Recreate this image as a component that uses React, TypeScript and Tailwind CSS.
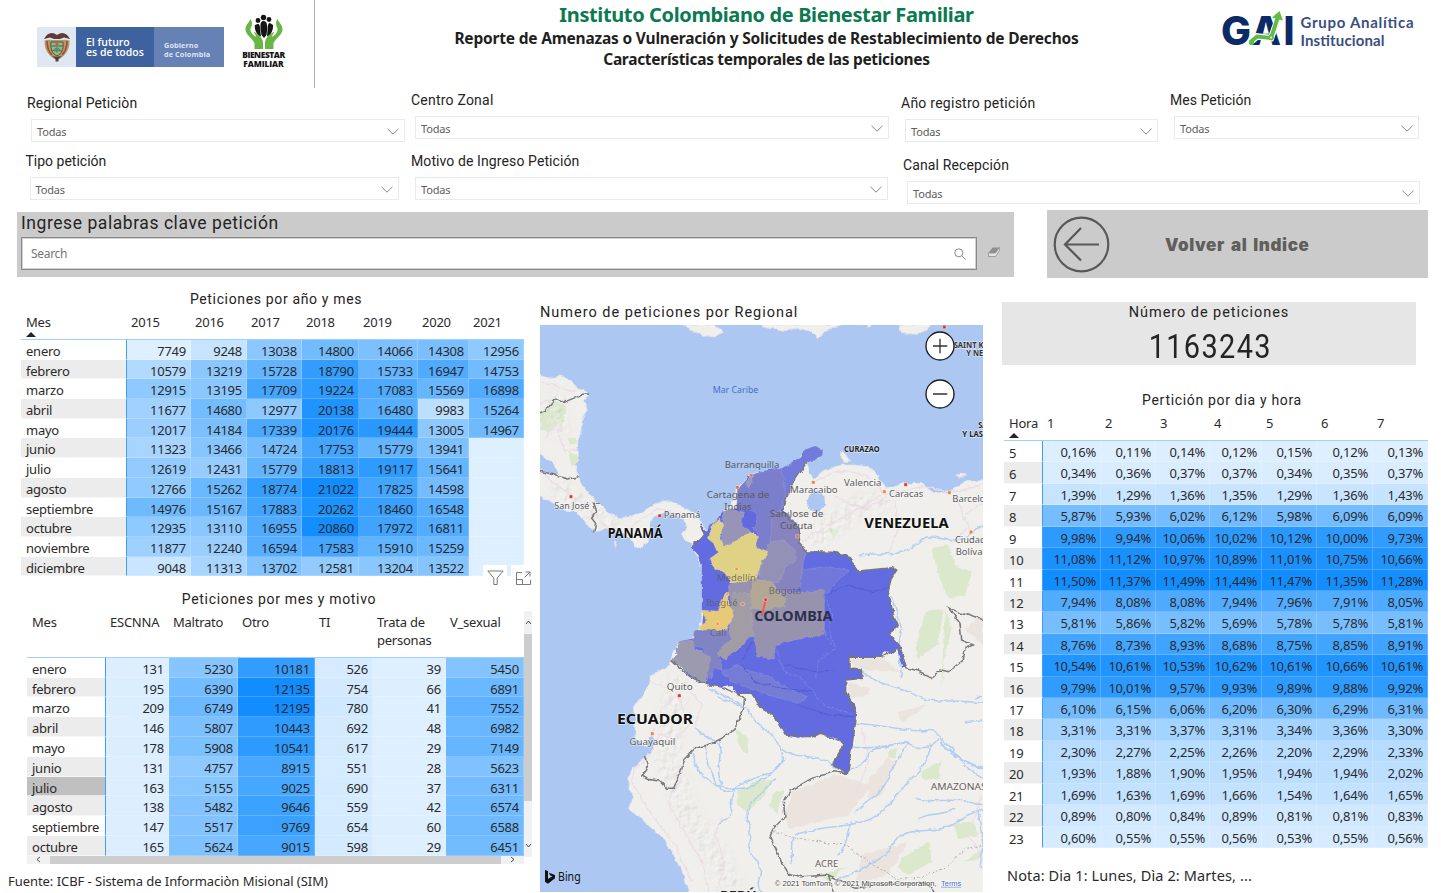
import React from "react";

const DIN = "font-[Roboto,sans-serif] text-[#252423]";
const SEGOE = "font-['Noto_Sans',sans-serif] text-[#2b2a29]";

/* ---------- heat scale ---------- */

function heat(value: number | null, min: number, max: number): string {
  const t = value === null ? 0 : (value - min) / (max - min);
  const mix = (a: number, b: number) => Math.round(a + (b - a) * t);
  return `rgb(${mix(222, 17)},${mix(239, 141)},255)`;
}

/* ---------- data ---------- */

const MONTHS = ["enero", "febrero", "marzo", "abril", "mayo", "junio", "julio", "agosto", "septiembre", "octubre", "noviembre", "diciembre"];

const BY_YEAR: (number | null)[][] = [
  [7749, 9248, 13038, 14800, 14066, 14308, 12956],
  [10579, 13219, 15728, 18790, 15733, 16947, 14753],
  [12915, 13195, 17709, 19224, 17083, 15569, 16898],
  [11677, 14680, 12977, 20138, 16480, 9983, 15264],
  [12017, 14184, 17339, 20176, 19444, 13005, 14967],
  [11323, 13466, 14724, 17753, 15779, 13941, null],
  [12619, 12431, 15779, 18813, 19117, 15641, null],
  [12766, 15262, 18774, 21022, 17825, 14598, null],
  [14976, 15167, 17883, 20262, 18460, 16548, null],
  [12935, 13110, 16955, 20860, 17972, 16811, null],
  [11877, 12240, 16594, 17583, 15910, 15259, null],
  [9048, 11313, 13702, 12581, 13204, 13522, null],
];

const BY_MOTIVE: number[][] = [
  [131, 5230, 10181, 526, 39, 5450],
  [195, 6390, 12135, 754, 66, 6891],
  [209, 6749, 12195, 780, 41, 7552],
  [146, 5807, 10443, 692, 48, 6982],
  [178, 5908, 10541, 617, 29, 7149],
  [131, 4757, 8915, 551, 28, 5623],
  [163, 5155, 9025, 690, 37, 6311],
  [138, 5482, 9646, 559, 42, 6574],
  [147, 5517, 9769, 654, 60, 6588],
  [165, 5624, 9015, 598, 29, 6451],
];

const BY_HOUR: number[][] = [
  [0.16, 0.11, 0.14, 0.12, 0.15, 0.12, 0.13],
  [0.34, 0.36, 0.37, 0.37, 0.34, 0.35, 0.37],
  [1.39, 1.29, 1.36, 1.35, 1.29, 1.36, 1.43],
  [5.87, 5.93, 6.02, 6.12, 5.98, 6.09, 6.09],
  [9.98, 9.94, 10.06, 10.02, 10.12, 10.0, 9.73],
  [11.08, 11.12, 10.97, 10.89, 11.01, 10.75, 10.66],
  [11.5, 11.37, 11.49, 11.44, 11.47, 11.35, 11.28],
  [7.94, 8.08, 8.08, 7.94, 7.96, 7.91, 8.05],
  [5.81, 5.86, 5.82, 5.69, 5.78, 5.78, 5.81],
  [8.76, 8.73, 8.93, 8.68, 8.75, 8.85, 8.91],
  [10.54, 10.61, 10.53, 10.62, 10.61, 10.66, 10.61],
  [9.79, 10.01, 9.57, 9.93, 9.89, 9.88, 9.92],
  [6.1, 6.15, 6.06, 6.2, 6.3, 6.29, 6.31],
  [3.31, 3.31, 3.37, 3.31, 3.34, 3.36, 3.3],
  [2.3, 2.27, 2.25, 2.26, 2.2, 2.29, 2.33],
  [1.93, 1.88, 1.9, 1.95, 1.94, 1.94, 2.02],
  [1.69, 1.63, 1.69, 1.66, 1.54, 1.64, 1.65],
  [0.89, 0.8, 0.84, 0.89, 0.81, 0.81, 0.83],
  [0.6, 0.55, 0.55, 0.56, 0.53, 0.55, 0.56],
];

/* ---------- matrix ---------- */

type MatrixProps = {
  cols: string;
  headClass: string;
  rowClass: string;
  labelClass?: string;
  corner: string;
  sorted?: boolean;
  heads: string[];
  labels: string[];
  values: (number | null)[][];
  format: (v: number) => string;
  selected?: string;
};

function Matrix({ cols, headClass, rowClass, labelClass = "", corner, sorted, heads, labels, values, format, selected }: MatrixProps) {
  const flat = values.flat().filter((v): v is number => v !== null);
  const min = Math.min(...flat);
  const max = Math.max(...flat);
  return (
    <div className={`${SEGOE} text-[13px] tracking-[-0.24px]`}>
      <div className={`grid ${cols} ${headClass} border-b border-[#9fd1ff]`}>
        <div className="pl-[5px]">
          {corner}
          {sorted && (
            <svg className="block" width="10" height="5" viewBox="0 0 10 5">
              <path d="M5 0L10 5H0Z" fill="#252423" />
            </svg>
          )}
        </div>
        {heads.map((h) => (
          <div key={h} className="whitespace-pre pl-[4px]">{h}</div>
        ))}
      </div>
      {values.map((row, r) => (
        <div key={labels[r]} className={`grid grid-rows-[100%] ${cols} ${rowClass}`}>
          <div
            className={`border-r border-r-[#3a9fff] border-b border-b-white/60 pl-[5px] ${labelClass} ${
              labels[r] === selected ? "bg-[#c0c0c0]" : r % 2 ? "bg-[#ececec]" : "bg-white"
            }`}
          >
            {labels[r]}
          </div>
          {row.map((v, c) => (
            <div key={c} className="border-r border-b border-white/20 pr-[4px] text-right" style={{ backgroundColor: heat(v, min, max) }}>
              {v === null ? "" : format(v)}
            </div>
          ))}
        </div>
      ))}
    </div>
  );
}

/* ---------- slicers ---------- */

function Slicer({ label, className, labelClass = "" }: { label: string; className: string; labelClass?: string }) {
  return (
    <div className={className}>
      <div className={`${DIN} h-5 whitespace-nowrap text-[14px] leading-[21px] ${labelClass}`}>{label}</div>
      <div className="mt-[6px] ml-[4px] flex h-[23px] items-center justify-between border border-[#eaeaea] pr-[5px] pl-[5px]">
        <span className="font-['Noto_Sans',sans-serif] pt-[3px] text-[11px] tracking-[-0.15px] text-[#605e5c]">Todas</span>
        <svg className="mt-px" width="12" height="7" viewBox="0 0 12 7" fill="none" stroke="#8a8886">
          <path d="M.5 .8L6 6.2L11.500 .8" />
        </svg>
      </div>
    </div>
  );
}

/* ---------- logos ---------- */

function GovernmentLogo() {
  return (
    <div className="mt-[27px] flex h-[40px] w-[187px] text-white">
      <div className="flex w-[39px] items-center justify-center bg-[#dfe8f2]">
        <svg width="28" height="30" viewBox="0 0 28 30">
          <path d="M1 7C4 1 9 -1 14 3C19 -1 24 1 27 7L21 5.500L17 7H11L7 5.500Z" fill="#5c3b35" />
          <path d="M1.500 8.500C5 7 9 8 14 8S23 7 26.500 8.500C27 19 21 25 14 28C7 25 1 19 1.500 8.500Z" fill="#b59a63" />
          <path d="M4 9C4 16 6 20 9 23M24 9C24 16 22 20 19 23" stroke="#a34b3d" strokeWidth="1.600" fill="none" />
          <path d="M8 10H20C21 18 18 22 14 24C10 22 7 18 8 10Z" fill="#8fb8a2" stroke="#5f4f37" />
          <path d="M8 14H20M9 18.500H19" stroke="#6d7c4b" strokeWidth="1.400" />
          <circle cx="14" cy="12" r="1.600" fill="#b8653b" />
          <path d="M11 17L14 15L17 17L14 21Z" fill="#59905f" />
          <path d="M9 24C12 25 16 25 19 24L15.500 27V29.500H12.500V27Z" fill="#5c3b35" />
        </svg>
      </div>
      <div className="w-[78px] bg-[#3e629f] pt-[10px] pl-[10px] font-['Open_Sans',sans-serif] text-[10.500px] leading-[10px] font-semibold whitespace-nowrap">
        <div>El futuro</div>
        <div>es de todos</div>
      </div>
      <div className="w-[70px] bg-[#6681b5] pt-[14px] pl-[10px] font-['Open_Sans',sans-serif] text-[7.300px] leading-[8.500px] font-bold tracking-[0.1px] whitespace-nowrap text-[#dbe4f4]">
        Gobierno
        <br />
        de Colombia
      </div>
    </div>
  );
}

function FamilyLogo() {
  return (
    <div className="mt-[14px] ml-[18px] w-[43px]">
      <svg className="mx-auto block" width="38" height="36" viewBox="0 0 38 36">
        <g fill="#151515">
          <circle cx="18.500" cy="3.500" r="2.700" />
          <circle cx="13" cy="6.500" r="2.400" />
          <circle cx="24" cy="5.500" r="2.400" />
          <path d="M18.500 7C23 7 22.500 14 21.500 21L19 24L16.500 21C15 13 14.500 7 18.500 7Z" />
          <path d="M12.500 10C15.500 9 15 15 16 22.500C11 21 9 14 10 11Z" />
          <path d="M25 9C22 9 23 15 22 22.500C27 21 28.500 14 28 11Z" />
        </g>
        <path
          d="M5.500 5C4 9 0 11 .5 16C1 21 7 24 9.500 29V35H18V28C17 23 13 20 8.500 17.500L11.500 23C7.500 21 5 18 5.500 14.500C7.500 11 7.500 8 5.500 5ZM32.500 5C34 9 38 11 37.500 16C37 21 31 24 28.500 29V35H20V28C21 23 25 20 29.500 17.500L26.500 23C30.500 21 33 18 32.500 14.500C30.500 11 30.500 8 32.500 5Z"
          fill="#69b546"
        />
      </svg>
      <div className="font-['Open_Sans',sans-serif] text-center text-[8.400px] leading-[9px] font-extrabold tracking-[-0.4px] text-[#151515]">
        BIENESTAR
        <br />
        <span className="tracking-[-0.1px]">FAMILIAR</span>
      </div>
    </div>
  );
}

function GaiLogo() {
  return (
    <svg width="200" height="62" viewBox="1218 0 200 62">
      <g fill="#0b2a66" fontFamily="Inter, sans-serif" fontWeight="800" fontSize="39">
        <text x="1221" y="45" textLength="30" lengthAdjust="spacingAndGlyphs">G</text>
        <text x="1251" y="45" textLength="30" lengthAdjust="spacingAndGlyphs">A</text>
        <text x="1283.500" y="45" textLength="11" lengthAdjust="spacingAndGlyphs">I</text>
      </g>
      <path d="M1250 42.500L1257 36.500L1271 38L1278 19" fill="none" stroke="#fff" strokeWidth="6.500" />
      <path d="M1250 42.500L1257 36.500L1271 38L1278 17" fill="none" stroke="#62bb46" strokeWidth="4" />
      <path d="M1272 17.500L1279.500 11L1283 20.500Z" fill="#62bb46" />
      <circle cx="1251.500" cy="42.500" r="2.600" fill="#62bb46" />
      <circle cx="1271" cy="37.500" r="2.800" fill="#62bb46" />
      <circle cx="1271" cy="37.500" r="1" fill="#fff" />
      <g fill="#3a4f7f" fontFamily="Lato, sans-serif" fontWeight="700" fontSize="15">
        <text x="1300.500" y="28" textLength="113" lengthAdjust="spacing">Grupo Analítica</text>
        <text x="1300.500" y="45.500" textLength="84" lengthAdjust="spacing">Institucional</text>
      </g>
    </svg>
  );
}

/* ---------- map ---------- */

const LAND =
  "M0 238L40 248L80 243L110 258L125 280L155 290L160 300L148 318L157 345L140 370L138 410L128 440L130 480L120 510L130 545L150 580L185 620L215 650L250 668L290 665L330 645L370 622L410 620L450 640L480 655L500 680L520 715L535 700L545 680L560 650L590 630L605 580L640 545L655 535L710 525L745 520L790 495L810 468L840 453L864 470L858 488L815 505L822 525L840 548L870 525L920 510L960 510L1000 515L1030 540L1035 560L1060 578L1100 565L1160 565L1190 590L1240 590L1290 560L1360 555L1360 1810L470 1810L440 1725L420 1690L400 1650L375 1620L350 1600L290 1545L280 1540L295 1515L285 1485L275 1450L290 1425L315 1400L330 1385L355 1365L352 1325L340 1330L335 1355L300 1330L300 1270L295 1240L320 1200L345 1165L345 1140L380 1125L405 1110L410 1095L425 1050L440 1040L470 1030L490 1005L500 975L500 820L490 790L470 760L472 742L450 735L440 715L460 695L430 665L395 650L360 660L345 680L345 710L340 740L320 760L300 755L290 735L260 710L220 700L185 710L160 695L140 670L125 650L100 650L60 630L40 615L0 595Z";

const COLOMBIA =
  "M498 683L508 720L490 740L478 740L470 760L490 780L500 810L500 945L505 960L500 1000L475 1030L440 1038L422 1060L425 1080L410 1097L440 1115L465 1145L490 1160L515 1168L555 1175L590 1170L605 1195L650 1195L680 1240L720 1265L730 1290L750 1320L790 1328L830 1325L860 1315L900 1330L928 1347L892 1408L937 1438L965 1260L960 1230L932 1190L932 1155L982 1150L978 1125L942 1122L942 1087L1040 1087L1045 1072L1070 1075L1086 1060L1102 1118L1115 1118L1095 1050L1062 1015L1088 995L1075 960L1060 890L1068 850L1083 825L1070 818L1000 825L970 828L935 780L890 772L815 770L795 745L790 700L760 665L740 645L770 570L815 505L862 485L862 468L840 453L808 465L800 485L745 520L700 525L655 537L640 545L608 580L605 640L560 650L545 675L525 690L515 710Z";

const DEPARTMENTS: [string, string][] = [
  ["#727ada", "M740 522L800 485L808 465L840 453L862 468L862 485L815 505L770 570L740 645L735 600Z"],
  ["#7b7fcb", "M608 580L655 537L742 522L745 560L752 600L735 645L720 700L700 770L668 760L665 712L640 680L620 640L605 640Z"],
  ["#6269dd", "M622 640L660 650L665 690L640 705L620 685Z"],
  ["#9a98bb", "M630 560L652 540L655 560L640 580Z"],
  ["#9794b8", "M560 652L590 640L625 655L620 690L650 710L610 735L585 755L555 750L567 690Z"],
  ["#8683bf", "M715 650L762 655L792 700L795 745L815 770L805 800L800 870L760 900L700 880L665 850L680 800L700 770Z"],
  ["#9391b6", "M705 740L750 735L785 770L780 800L750 820L730 860L690 860L670 840L682 800Z"],
  ["#7178da", "M800 825L870 815L940 825L900 870L860 905L868 925L800 930L750 915L795 890Z"],
  ["#9792ae", "M580 870L650 850L700 865L760 895L868 885L868 1018L780 1035L720 1050L718 1092L665 1085L655 1020L590 1010L590 940Z"],
  ["#b2a795", "M655 850L715 862L730 895L752 915L748 938L722 935L700 945L650 940L645 900Z"],
  ["#a29ca4", "M595 895L650 895L650 950L655 1020L615 1060L570 1093L545 1080L580 1020L590 960Z"],
  ["#8084c3", "M478 1005L580 1005L590 1030L545 1070L565 1125L540 1120L525 1150L515 1100L505 1060L470 1050Z"],
  ["#9c9aae", "M440 1038L470 1035L480 1060L525 1085L515 1166L490 1160L440 1115L410 1097L425 1080L422 1060Z"],
  ["#757cd5", "M560 1130L600 1110L650 1130L700 1140L760 1180L820 1205L790 1225L700 1200L640 1180L590 1160Z"],
  ["#dfd284", "M530 690L555 668L567 690L555 730L562 753L590 752L610 730L645 712L668 725L665 760L690 765L702 775L680 800L665 850L630 860L585 865L570 835L535 820L525 790L548 775L535 745L517 730Z"],
  ["#e6ca78", "M497 945L545 948L575 895L585 930L595 940L590 975L575 1005L500 1005L490 1000L515 975Z"],
];

const BORDERS = [
  "M0 360L35 345L60 312L85 322L115 310L140 298L162 297",
  "M0 525L40 535L70 545L100 552L130 545",
  "M195 627L175 625L185 650L170 670L182 685L175 712",
  "M498 683L508 720L490 740L478 740L470 760",
  "M815 505L770 570L740 645L760 665L790 700L795 745L815 770L890 772L935 780L970 828L1000 825L1070 818L1083 825L1068 850L1060 890L1075 960L1088 995L1062 1015L1090 1050L1115 1118L1150 1128L1190 1148L1215 1125L1240 1130L1285 1095L1290 1060L1315 1050L1280 1035L1275 985L1240 938L1280 955L1344 975",
  "M410 1097L465 1145L515 1168L555 1175L605 1195L650 1195L680 1240L720 1265L750 1320L830 1325L860 1315L928 1347L892 1408L937 1438L965 1260L932 1190L932 1155L982 1150L978 1125L942 1122L942 1087L1040 1087L1086 1060",
  "M605 1195L628 1215L625 1245L600 1300L560 1330L520 1350L480 1360L450 1390L435 1440L415 1480L395 1480L370 1455L340 1450L320 1440L340 1415L332 1380",
  "M937 1438L900 1430L830 1450L770 1485L745 1520L750 1565L715 1600L705 1625L740 1700L760 1735L800 1745L880 1740L900 1800",
  "M880 1740L960 1780L1050 1765L1180 1765L1200 1800",
];

const RIVERS = [
  "M970 780C1040 770 1100 790 1140 750S1200 730 1240 735S1300 720 1344 690",
  "M965 1285C1020 1290 1060 1295 1120 1305S1200 1290 1215 1330S1290 1400 1344 1420",
  "M1210 1330C1190 1360 1150 1370 1130 1350S1040 1370 950 1355",
  "M1215 1345C1250 1380 1290 1400 1344 1425M1220 1330C1260 1360 1280 1420 1344 1450",
  "M740 1360C790 1400 850 1370 890 1410S1000 1400 1000 1380S1080 1350 1120 1340",
  "M640 1245C660 1300 720 1300 740 1370S650 1440 600 1480S520 1420 510 1350",
  "M475 1370C480 1440 520 1470 590 1480S720 1430 750 1390",
  "M555 1340C560 1400 540 1430 560 1470",
  "M720 1450C680 1500 620 1530 640 1580S620 1640 660 1690S650 1760 680 1791",
  "M600 1480C570 1540 600 1550 590 1560L550 1590",
  "M780 1620C850 1590 950 1600 1010 1570S1080 1500 1130 1450S1180 1380 1190 1345",
  "M775 1625C760 1670 780 1680 770 1710",
  "M960 1555C1000 1510 1040 1500 1060 1450S1080 1400 1120 1345",
  "M950 1580C930 1620 940 1660 905 1680",
  "M910 1750C1000 1720 1050 1690 1080 1640S1200 1620 1250 1590S1290 1560 1344 1545",
  "M1140 1510C1200 1530 1260 1500 1344 1530M1150 1570C1200 1550 1240 1560 1260 1540",
  "M980 1130C1040 1180 1100 1170 1140 1200S1260 1210 1344 1225",
  "M1070 900L1100 1000L1090 1060L1100 1150",
  "M520 1180C560 1200 600 1210 625 1235M550 1205C580 1220 600 1225 640 1240",
  "M480 1300C520 1330 550 1340 560 1360",
  "M1330 1550L1344 1650L1335 1720",
  "M1290 1280L1344 1275M1320 1210L1344 1200",
];

const ROADS = [
  "M30 540C80 590 130 600 200 680S300 670 370 640L480 670",
  "M20 260L120 290M30 430L60 380L90 470L130 460",
  "M840 560C900 520 960 520 1020 560L1050 600L1160 575L1260 590L1344 570",
  "M900 600C960 650 1000 640 1050 610M1080 620L1090 700L1060 780M800 740L900 680L1040 600",
  "M1260 600L1300 700L1250 740M1344 620L1290 660",
  "M350 1160L400 1180L430 1200L460 1290L420 1330L370 1320L340 1390L300 1420L290 1460L350 1560L420 1650L470 1760",
  "M430 1200L380 1240L350 1310M460 1180L500 1230L480 1300",
  "M440 1450L400 1520L440 1600L500 1700L520 1791M545 1791L570 1700L540 1620L560 1570",
  "M1340 1500L1300 1620L1344 1690M960 1500L1000 1400L980 1300",
];

const GREENS = [
  "M15 350L60 320L95 335L85 380L40 410L15 400Z",
  "M100 470L125 475L130 500L110 515Z",
  "M98 430L125 430L125 450L105 450Z",
  "M1190 760L1240 750L1260 810L1310 830L1290 900L1240 910L1210 840Z",
  "M1170 950L1225 945L1210 1050L1150 1090L1140 1060Z",
  "M1230 940L1250 1000L1230 1080L1220 1180L1225 1030Z",
  "M600 1300L640 1330L635 1380L610 1350Z",
  "M610 1490L660 1460L710 1455L690 1500L640 1550L605 1530Z",
  "M715 1495L745 1485L725 1560L705 1530Z",
  "M1060 1365L1090 1355L1080 1385L1060 1390Z",
  "M1160 1430L1220 1395L1210 1450L1165 1455Z",
  "M1255 1585L1310 1580L1330 1620L1270 1635Z",
  "M1100 1690L1180 1640L1190 1700L1120 1740L1090 1720Z",
  "M860 1740L930 1715L880 1760Z",
  "M880 700L910 705L895 730Z",
  "M1290 1700L1344 1660L1344 1690Z",
];

const BEIGES = [
  "M770 1490L900 1440L1010 1470L940 1560L760 1600L750 1560Z",
  "M1000 1450L1060 1390L1080 1400L1040 1500L1000 1520Z",
  "M945 1090L1040 1090L1095 1130L960 1125Z",
  "M940 1165L1010 1180L1000 1200L940 1210Z",
  "M980 1680L1120 1640L1060 1740L960 1770Z",
  "M1290 1000L1344 960L1344 1050Z",
  "M1090 1250L1180 1230L1100 1280Z",
];

type Label = { t: string; x: number; y: number; w: number; s: number; c?: string; b?: boolean };

const UNDER: Label[] = [
  { t: "Medellín", x: 545, y: 857, w: 118, s: 29 },
  { t: "Bogotá", x: 701, y: 897, w: 98, s: 29 },
  { t: "Ibagué", x: 512, y: 932, w: 96, s: 29 },
  { t: "Cali", x: 524, y: 1022, w: 50, s: 29 },
];

const LABELS: Label[] = [
  { t: "Mar Caribe", x: 533, y: 294, w: 137, s: 27, c: "#4a6fc4" },
  { t: "Barranquilla", x: 569, y: 520, w: 164, s: 29 },
  { t: "Cartagena de", x: 515, y: 610, w: 188, s: 29 },
  { t: "Indias", x: 568, y: 646, w: 82, s: 29 },
  { t: "San Jose de", x: 704, y: 667, w: 161, s: 29 },
  { t: "Cucuta", x: 735, y: 703, w: 98, s: 29 },
  { t: "Maracaibo", x: 765, y: 594, w: 143, s: 29 },
  { t: "Valencia", x: 927, y: 574, w: 112, s: 29 },
  { t: "Caracas", x: 1062, y: 605, w: 103, s: 29 },
  { t: "Barcelona", x: 1252, y: 622, w: 132, s: 29 },
  { t: "Ciudad", x: 1260, y: 743, w: 92, s: 29 },
  { t: "Bolívar", x: 1262, y: 779, w: 92, s: 29 },
  { t: "Panamá", x: 386, y: 670, w: 110, s: 29 },
  { t: "San José", x: 58, y: 641, w: 105, s: 27 },
  { t: "Quito", x: 395, y: 1184, w: 78, s: 29 },
  { t: "Guayaquil", x: 283, y: 1351, w: 138, s: 29 },
  { t: "AMAZONAS", x: 1187, y: 1484, w: 168, s: 27, c: "#6b5a5a" },
  { t: "ACRE", x: 840, y: 1716, w: 70, s: 27, c: "#6b5a5a" },
  { t: "CURAZAO", x: 927, y: 471, w: 107, s: 24, c: "#222", b: true },
  { t: "SAINT KITTS", x: 1256, y: 158, w: 138, s: 25, c: "#333", b: true },
  { t: "Y NEVIS", x: 1294, y: 183, w: 86, s: 25, c: "#333", b: true },
  { t: "SAN", x: 1330, y: 399, w: 45, s: 25, c: "#222", b: true },
  { t: "Y LAS", x: 1282, y: 425, w: 62, s: 25, c: "#222", b: true },
  { t: "PANAMÁ", x: 218, y: 729, w: 165, s: 40, c: "#111", b: true },
  { t: "VENEZUELA", x: 988, y: 699, w: 253, s: 45, c: "#111", b: true },
  { t: "ECUADOR", x: 246, y: 1288, w: 228, s: 45, c: "#111", b: true },
  { t: "COLOMBIA", x: 658, y: 978, w: 234, s: 45, c: "#2c2f4c", b: true },
  { t: "PERÚ", x: 555, y: 1818, w: 110, s: 42, c: "#222", b: true },
];

const CITIES: [number, number, string][] = [
  [108, 605, "#e0301e"], [374, 662, "#e0301e"], [1112, 569, "#e0301e"], [433, 1202, "#e0301e"], [692, 914, "#f0302e"], [1228, 96, "#e0301e"],
  [649, 541, "#d9775d"], [607, 577, "#ee6b3c"], [835, 562, "#f47a3c"], [1048, 590, "#f47a3c"], [1243, 593, "#f47a3c"], [1308, 711, "#f47a3c"],
  [787, 724, "#e0704c"], [352, 1316, "#f47a3c"], [605, 822, "#ef9a3e"], [623, 927, "#c9826a"], [548, 986, "#f09a3a"], [577, 898, "#efb03e"],
];

function MapText({ l, halo }: { l: Label; halo: boolean }) {
  return (
    <text
      x={l.x}
      y={l.y}
      fontSize={l.s}
      fontWeight={l.b ? 700 : 400}
      fill={l.c ?? "#5a5a5e"}
      textLength={l.w}
      lengthAdjust="spacingAndGlyphs"
      stroke={halo ? "rgba(255,255,255,.55)" : "none"}
      strokeWidth={halo ? 4 : 0}
      paintOrder="stroke"
    >
      {l.t}
    </text>
  );
}

function RegionMap() {
  return (
    <svg className="block" width="443" height="567" viewBox="15 90 1329 1701" fontFamily="'Noto Sans', sans-serif">
      <defs>
        <filter id="rough" filterUnits="userSpaceOnUse" x="0" y="80" width="1360" height="1720" colorInterpolationFilters="sRGB">
          <feTurbulence type="fractalNoise" baseFrequency="0.045" numOctaves="3" seed="4" />
          <feDisplacementMap in="SourceGraphic" scale="14" xChannelSelector="R" yChannelSelector="G" />
        </filter>
        <filter id="relief" filterUnits="userSpaceOnUse" x="0" y="80" width="1360" height="1720">
          <feTurbulence type="fractalNoise" baseFrequency="0.05" numOctaves="3" seed="9" result="n" />
          <feDiffuseLighting in="n" surfaceScale="7" lightingColor="#fff" result="l">
            <feDistantLight azimuth="225" elevation="55" />
          </feDiffuseLighting>
          <feGaussianBlur in="SourceAlpha" stdDeviation="16" result="m" />
          <feComposite in="l" in2="m" operator="in" />
        </filter>
        <clipPath id="land"><path d={LAND} /></clipPath>
      </defs>
      <rect x="0" y="80" width="1360" height="1720" fill="#abc7f2" />
      <g filter="url(#rough)">
        <path d={LAND} fill="#f0efeb" stroke="#dfe5ee" strokeWidth="2" />
        <g fill="#f0efeb" stroke="#e6dfe6" strokeWidth="3">
          <path d="M442 88L470 108L510 122L540 126L566 114L560 100L530 88Z" />
          <path d="M670 88L690 98L740 105L790 100L825 108L850 132L868 110L905 96L920 88Z" />
          <path d="M1098 88L1096 112L1140 118L1170 112L1188 88Z" />
          <path d="M922 470L935 480L944 498L925 500L918 485Z" />
          <path d="M965 84L1010 84L1005 94Z" />
          <path d="M1260 540L1290 535L1295 542L1270 547Z" />
          <path d="M238 740L246 740L242 758Z" />
          <path d="M520 700L530 690L530 710Z" />
        </g>
        <path d="M0 470L20 480L50 505L75 540L50 540L20 525L0 520Z" fill="#abc7f2" />
        <path d="M830 590L850 585L868 605L870 630L850 650L825 645L812 620Z" fill="#abc7f2" />
        <path d="M352 1318L362 1340L345 1375L325 1380L340 1345Z" fill="#abc7f2" />
        <path d="M822 508L850 505L865 520L835 550L822 535Z" fill="#abc7f2" />
        {GREENS.map((d) => <path key={d} d={d} fill="#dbe8cb" />)}
        {BEIGES.map((d) => <path key={d} d={d} fill="#ebe4de" />)}
      </g>
      <g clipPath="url(#land)" opacity=".28">
        <path
          d="M430 1140L410 1260L400 1400L460 1560L540 1680L600 1791M830 740L960 640L1060 610M60 580L180 660L260 690M40 300L80 420"
          filter="url(#relief)"
          fill="none"
          stroke="#000"
          strokeWidth="60"
        />
      </g>
      <g filter="url(#rough)" fill="none">
        {ROADS.map((d) => <path key={d} d={d} stroke="#eddbe6" strokeWidth="3.500" />)}
        {RIVERS.map((d) => <path key={d} d={d} stroke="#b3cdf3" strokeWidth="4.500" />)}
        <path d="M715 1610L780 1630L930 1650L1000 1700L1090 1755L1160 1745L1230 1720L1290 1660L1344 1655" stroke="#aaa" strokeWidth="3" strokeDasharray="6 6" />
      </g>
      <g filter="url(#rough)">
        <path d={COLOMBIA} fill="#636be1" />
        {DEPARTMENTS.map(([fill, d]) => <path key={d} d={d} fill={fill} stroke="rgba(190,190,225,.35)" strokeWidth="2" />)}
        <g fill="none" stroke="#8d92e4" strokeWidth="2" strokeDasharray="10 4">
          <path d="M720 1050L750 1130L800 1150L850 1210L870 1235L950 1255" />
          <path d="M868 1018L900 1060L850 1100L845 1150" />
          <path d="M870 900L890 960L880 1010L900 1050" />
        </g>
        <g fill="none" stroke="#5058cd" strokeWidth="2.500">
          <path d="M620 1110L660 1160L740 1180L830 1190M750 1110L830 1130L900 1125M790 1230L880 1260L960 1265M870 900L940 870L1010 890L1060 880M650 1040L620 1100" />
        </g>
        <g fill="none" stroke="#77777b" strokeWidth="4.500">
          {BORDERS.map((d) => <path key={d} d={d} />)}
        </g>
      </g>
      <g opacity=".75">
        {UNDER.map((l) => <MapText key={l.t} l={l} halo={false} />)}
      </g>
      {LABELS.map((l) => <MapText key={l.t} l={l} halo={l.x < 500 || l.x > 750} />)}
      <path d="M692 916L680 962" stroke="#f05a5a" strokeWidth="6" />
      {CITIES.map(([x, y, fill]) => (
        <rect key={`${x}-${y}`} x={x - 5} y={y - 5} width="10" height="10" rx="2" fill={fill} stroke="rgba(255,255,255,.6)" strokeWidth="2" />
      ))}
      <g fill="#fff" stroke="#1b1b1b" strokeWidth="4">
        <circle cx="1215" cy="153" r="42" />
        <circle cx="1215" cy="297" r="42" />
        <path d="M1194 153H1237M1215 131V175M1194 297H1237" stroke="#333" />
      </g>
      <path d="M30 1725L39 1728V1752L52 1744L45 1741L42 1733L60 1740V1750L39 1766L30 1760Z" fill="#111" />
      <text x="69" y="1757" fontSize="36" fill="#111" textLength="68" lengthAdjust="spacingAndGlyphs">Bing</text>
      <g fontFamily="'Liberation Sans', sans-serif" fontSize="22" stroke="rgba(255,255,255,.7)" strokeWidth="5" paintOrder="stroke">
        <text x="719" y="1772" fill="#444" textLength="486" lengthAdjust="spacingAndGlyphs">© 2021 TomTom, © 2021 Microsoft Corporation,</text>
        <text x="1218" y="1772" fill="#3f6fc9" textDecoration="underline" textLength="61" lengthAdjust="spacingAndGlyphs">Terms</text>
      </g>
    </svg>
  );
}

/* ---------- page ---------- */

const fmtPercent = (v: number) => `${v.toFixed(2).replace(".", ",")}%`;

export default function App() {
  return (
    <div className="flex h-[893px] w-[1441px] flex-col overflow-hidden bg-white">
      <header className="flex h-[88px] shrink-0">
        <div className="flex w-[315px] border-r border-[#b0b0b0] pl-[37px]">
          <GovernmentLogo />
          <FamilyLogo />
        </div>
        <div className="font-['Noto_Sans',sans-serif] flex w-[903px] flex-col items-center font-bold whitespace-nowrap text-[#1f1f1f]">
          <div className="h-7 pt-px text-[20px] leading-7 tracking-[-0.38px] text-[#0b7a50]">Instituto Colombiano de Bienestar Familiar</div>
          <div className="h-[21px] text-[15.500px] leading-[20px] tracking-[-0.2px]">Reporte de Amenazas o Vulneración y Solicitudes de Restablecimiento de Derechos</div>
          <div className="h-[21px] text-[15.500px] leading-[21px] tracking-[-0.3px]">Características temporales de las peticiones</div>
        </div>
        <GaiLogo />
      </header>

      <section className="flex h-[122px] shrink-0">
        <div className="flex w-[411px] flex-col pt-[5px]">
          <Slicer label="Regional Peticiòn" className="ml-[27px] w-[378px]" labelClass="tracking-[0.13px]" />
          <Slicer label="Tipo petición" className="mt-[9px] ml-[25.500px] w-[373px]" labelClass="tracking-[0px]" />
        </div>
        <div className="flex w-[490px] flex-col pt-[2px]">
          <Slicer label="Centro Zonal" className="w-[478px]" labelClass="tracking-[0.22px]" />
          <Slicer label="Motivo de Ingreso Petición" className="mt-[12px] w-[477px]" labelClass="tracking-[0.1px]" />
        </div>
        <div className="w-[520px]">
          <div className="flex">
            <Slicer label="Año registro petición" className="mt-[5px] w-[257px]" labelClass="tracking-[0.25px]" />
            <Slicer label="Mes Petición" className="mt-[2px] ml-[12px] w-[249px]" labelClass="tracking-[0.02px]" />
          </div>
          <Slicer label="Canal Recepción" className="mt-[13px] ml-[2px] w-[517px]" labelClass="tracking-[0.13px]" />
        </div>
      </section>

      <section className="flex h-[69px] shrink-0 pl-[17px]">
        <div className="mt-[2px] h-[65px] w-[997px] bg-[#cbcbcb] pl-[4px]">
          <div className={`${DIN} h-[25px] text-[17.500px] leading-[22px] tracking-[0.56px]`}>Ingrese palabras clave petición</div>
          <div className="flex items-center">
            <div className="flex h-[33px] w-[956px] items-center justify-between border border-[#8a8a8a] bg-white pr-[10px] pl-[9px] shadow-[inset_0_0_0_1px_#d0d0d0]">
              <span className="font-['Noto_Sans',sans-serif] pt-px text-[12px] tracking-[-0.3px] text-[#767676]">Search</span>
              <svg width="12" height="12" viewBox="0 0 12 12" fill="none" stroke="#8a8886">
                <circle cx="4.800" cy="4.800" r="4" />
                <path d="M7.800 7.800L11.500 11.500" />
              </svg>
            </div>
            <svg className="mb-[3px] ml-[11px]" width="12" height="10" viewBox="0 0 12 10">
              <path d="M4.500 .5H11.500L7.500 6H.5Z" fill="#8f8f8f" />
              <path d="M.5 6H7.500L11.500 .5V3.500L7.500 9.500H.5Z" fill="#e4e4e4" stroke="#8f8f8f" strokeWidth=".8" />
            </svg>
          </div>
        </div>
        <div className="ml-[33px] flex h-[68px] w-[381px] items-center bg-[#cbcbcb] pl-[6px]">
          <svg width="57" height="57" viewBox="0 0 57 57" fill="none" stroke="#5a5856" strokeWidth="2.200">
            <circle cx="28.500" cy="28.500" r="26.800" />
            <path d="M46 28.500H12M28 12L12 28.500L28 44.500" />
          </svg>
          <span className="ml-[55px] pt-[3px] font-[Inter,sans-serif] text-[17px] font-black tracking-[0.6px] whitespace-nowrap text-[#605e5c] [word-spacing:2px]">Volver al Indice</span>
        </div>
      </section>

      <main className="flex h-[614px] shrink-0">
        <div className="relative w-[540px] pt-[10px]">
          <h2 className={`${DIN} h-5 pl-[12px] text-center text-[14px] leading-5 tracking-[0.65px]`}>Peticiones por año y mes</h2>
          <div className="ml-[21px] w-[503px]">
            <Matrix
              cols="grid-cols-[106px_64px_56px_55px_57px_59px_51px_55px]"
              headClass="h-[31px] pt-[3px] leading-5"
              rowClass="h-[19.700px] leading-[23px]"
              corner="Mes"
              sorted
              heads={["2015", "2016", "2017", "2018", "2019", "2020", "2021"]}
              labels={MONTHS}
              values={BY_YEAR}
              format={String}
            />
          </div>
          <div className="absolute top-[286px] left-[483px] flex gap-[4px]">
            <div className="flex h-[25px] w-[24px] items-center justify-center bg-white">
              <svg width="17" height="16" viewBox="0 0 17 16" fill="none" stroke="#7c7a78">
                <path d="M.8 1H16.200L10.200 8V14.500H6.800V8Z" />
              </svg>
            </div>
            <div className="flex h-[25px] w-[24px] items-center justify-center bg-white">
              <svg width="15" height="14" viewBox="0 0 15 14" fill="none" stroke="#7c7a78">
                <path d="M6 1.500H.5V13.500H14.500V9M.5 8.500H6.500V13.500M9.500 1H14V5.500M14 1L8.500 6.500" />
              </svg>
            </div>
          </div>

          <h2 className={`${DIN} mt-[12.600px] h-5 pl-[18px] text-center text-[14px] leading-5 tracking-[0.67px]`}>Peticiones por mes y motivo</h2>
          <div className="ml-[27px] flex">
            <div className="w-[497px]">
              <Matrix
                cols="grid-cols-[79px_63px_69px_77px_58px_73px_78px]"
                headClass="h-[49px] pt-[4px] leading-[18px]"
                rowClass="h-[19.800px] leading-[22px]"
                corner="Mes"
                heads={["ESCNNA", "Maltrato", "Otro", "TI", "Trata de\npersonas", "V_sexual"]}
                labels={MONTHS.slice(0, 10)}
                values={BY_MOTIVE}
                format={String}
                selected="julio"
              />
              <div className="flex h-[8px] items-center bg-[#f1f1f1]">
                <svg className="mx-[8px]" width="7" height="7" viewBox="0 0 7 7" fill="none" stroke="#505050"><path d="M5 1L2 3.500L5 6" /></svg>
                <div className="h-[8px] flex-1 bg-[#cdcdcd]" />
                <svg className="mx-[8px]" width="7" height="7" viewBox="0 0 7 7" fill="none" stroke="#505050"><path d="M2 1L5 3.500L2 6" /></svg>
              </div>
            </div>
            <div className="mt-[2px] flex h-[246px] w-[8px] flex-col items-center bg-[#f1f1f1]">
              <svg className="my-[8px] shrink-0" width="7" height="7" viewBox="0 0 7 7" fill="none" stroke="#505050"><path d="M1 5L3.500 2L6 5" /></svg>
              <div className="h-[167px] w-[8px] shrink-0 bg-[#cdcdcd]" />
              <svg className="mt-auto mb-[8px] shrink-0" width="7" height="7" viewBox="0 0 7 7" fill="none" stroke="#505050"><path d="M1 2L3.500 5L6 2" /></svg>
            </div>
          </div>
          <p className={`${SEGOE} mt-[7px] ml-[8px] h-5 text-[13px] leading-5 tracking-[-0.05px] whitespace-nowrap`}>Fuente: ICBF - Sistema de Informaciòn Misional (SIM)</p>
        </div>

        <div className="w-[443px] pt-[23px]">
          <h2 className={`${DIN} mb-[3px] h-5 text-[14.500px] leading-[22px] tracking-[0.98px] whitespace-nowrap`}>Numero de peticiones por Regional</h2>
          <RegionMap />
        </div>

        <div className="w-[458px] pt-[23px] pl-[19px]">
          <div className={`${DIN} h-[63px] w-[414px] bg-[#e6e6e6] text-center`}>
            <div className="h-5 text-[14.500px] leading-[22px] tracking-[0.95px]">Número de peticiones</div>
            <div className="h-[43px] scale-x-[0.85] pl-[3px] text-[34px] leading-[49px] tracking-[1.6px]">1163243</div>
          </div>
          <h2 className={`${DIN} mt-[25px] h-5 w-[440px] text-center text-[14px] leading-5 tracking-[0.68px]`}>Pertición por dia y hora</h2>
          <div className="ml-[2px] w-[424px]">
            <Matrix
              cols="grid-cols-[39px_58px_55px_54px_52px_55px_56px_55px]"
              headClass="h-[31px] pt-[3px] leading-5"
              rowClass="h-[21.430px] leading-[22px]"
              labelClass="pt-px"
              corner="Hora"
              sorted
              heads={["1", "2", "3", "4", "5", "6", "7"]}
              labels={BY_HOUR.map((_, i) => String(i + 5))}
              values={BY_HOUR}
              format={fmtPercent}
            />
          </div>
          <p className={`${SEGOE} mt-[17px] ml-[5px] h-5 text-[14.500px] leading-5 tracking-[0.12px] whitespace-nowrap`}>Nota: Dia 1: Lunes, Dìa 2: Martes, ...</p>
        </div>
      </main>
    </div>
  );
}
